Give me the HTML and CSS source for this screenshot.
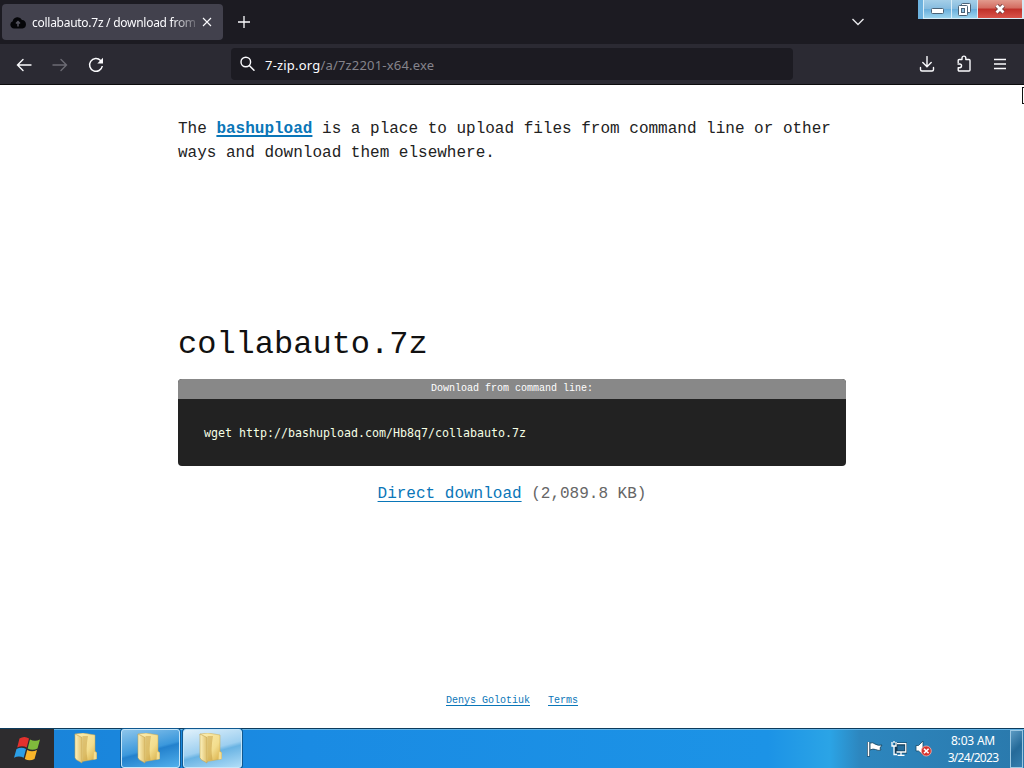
FILE: index.html
```
<!DOCTYPE html>
<html lang="en">

<head>
    <meta charset="UTF-8">
    <title>collabauto.7z / download from bashupload</title>
    <link rel="stylesheet" href="styles.css">
</head>

<body>

    <div class="tabs">
        <div class="tab">
            <svg class="cloud" width="16" height="13" viewBox="0 0 16 13">
                <path d="M4 12.500a3.800 3.800 0 0 1-1.300-7.300A5 5 0 0 1 12 4a4.300 4.300 0 0 1 .5 8.500z" fill="#050508"/>
                <path d="M8 10.500V6M6 7.500l2-2 2 2" stroke="#55545f" stroke-width="1.500" fill="none"/>
            </svg>
            <span class="tab-title">collabauto.7z / download from</span>
            <svg class="tab-close" width="10" height="10" viewBox="0 0 10 10">
                <path d="M1 1l8 8M9 1L1 9" stroke="#fbfbfe" stroke-width="1.100"/>
            </svg>
        </div>
        <svg class="new-tab" width="12" height="12" viewBox="0 0 12 12">
            <path d="M6 0v12M0 6h12" stroke="#fbfbfe" stroke-width="1.300"/>
        </svg>
        <svg class="all-tabs" width="14" height="8" viewBox="0 0 14 8">
            <path d="M1.500 1L7 6.500 12.500 1" stroke="#e6e6ea" stroke-width="1.400" fill="none"/>
        </svg>
        <div class="window-buttons">
            <div class="edge"></div>
            <div class="win-btn minimize">
                <svg width="13" height="6" viewBox="0 0 13 6">
                    <rect x=".5" y=".5" width="12" height="5" rx="1" fill="#fff" stroke="#4b6276"/>
                </svg>
            </div>
            <div class="win-btn restore">
                <svg width="13" height="13" viewBox="0 0 13 13">
                    <rect x="3.500" y=".5" width="9" height="9" rx="1" fill="#fff" stroke="#4b6276"/>
                    <rect x=".5" y="2.500" width="9" height="10" rx="1" fill="#fff" stroke="#4b6276"/>
                    <rect x="3.500" y="5.500" width="3" height="4" fill="#8fc0df" stroke="#4b6276"/>
                </svg>
            </div>
            <div class="win-btn close">
                <svg width="12" height="10" viewBox="0 0 12 10">
                    <path d="M2.500 1.500l7 7M9.500 1.500l-7 7" stroke="#6a3a3c" stroke-width="4.400"/>
                    <path d="M2.500 1.500l7 7M9.500 1.500l-7 7" stroke="#fff" stroke-width="2.800"/>
                </svg>
            </div>
        </div>
    </div>

    <div class="toolbar">
        <svg class="back" width="16" height="14" viewBox="0 0 16 14">
            <path d="M15 7H1.500M7 1.500L1.500 7 7 12.500" stroke="#fbfbfe" stroke-width="1.400" fill="none" stroke-linecap="round"/>
        </svg>
        <svg class="forward" width="16" height="14" viewBox="0 0 16 14">
            <path d="M1 7h13.500M9 1.500L14.500 7 9 12.500" stroke="#6c6b74" stroke-width="1.400" fill="none" stroke-linecap="round"/>
        </svg>
        <svg class="reload" width="16" height="16" viewBox="0 0 16 16">
            <path d="M14.300 9A6.400 6.400 0 1 1 12.600 3.500L14 5" stroke="#fbfbfe" stroke-width="1.500" fill="none"/>
            <path d="M15 .8v5.700H9.300z" fill="#fbfbfe"/>
        </svg>
        <div class="urlbar">
            <svg width="16" height="16" viewBox="0 0 16 16">
                <circle cx="5.800" cy="6" r="4.800" stroke="#fbfbfe" stroke-width="1.400" fill="none"/>
                <path d="M9.300 9.500l4.700 4.700" stroke="#fbfbfe" stroke-width="1.500" stroke-linecap="round"/>
            </svg>
            <span class="url">7-zip.org<span class="path">/a/7z2201-x64.exe</span></span>
        </div>
        <div class="tools">
            <svg width="16" height="16" viewBox="0 0 16 16">
                <path d="M8 .5v10M3.800 6.500L8 10.700l4.200-4.200M1.500 11.500v2a1.500 1.500 0 0 0 1.500 1.500h10a1.500 1.500 0 0 0 1.500-1.500v-2" stroke="#fbfbfe" stroke-width="1.400" fill="none" stroke-linecap="round"/>
            </svg>
            <svg width="16" height="18" viewBox="0 0 16 18">
                <path d="M2.200 8V5.500a1 1 0 0 1 1-1H6V3a1.900 1.900 0 0 1 3.800 0v1.500h3.200a1 1 0 0 1 1 1V15a1 1 0 0 1-1 1H3.200a1 1 0 0 1-1-1v-2.300h1.500a1.700 1.700 0 0 0 0-3.700H1.500" stroke="#fbfbfe" stroke-width="1.400" fill="none" stroke-linejoin="round"/>
            </svg>
            <svg width="14" height="12" viewBox="0 0 14 12">
                <path d="M1 1.500h12M1 6h12M1 10.500h12" stroke="#fbfbfe" stroke-width="1.300"/>
            </svg>
        </div>
    </div>

    <div class="page">
        <p class="intro">The <a href="#">bashupload</a> is a place to upload files from command line or other ways and download them elsewhere.</p>
        <h1>collabauto.7z</h1>
        <div class="command">
            <div class="command-label">Download from command line:</div>
            <code>wget http://bashupload.com/Hb8q7/collabauto.7z</code>
        </div>
        <p class="direct"><a href="#">Direct download</a> (2,089.8 KB)</p>
        <div class="footer">
            <a href="#">Denys Golotiuk</a>
            <a href="#">Terms</a>
        </div>
        <!-- mouse pointer at the right edge -->
        <div class="pointer"></div>
    </div>

    <div class="taskbar">
        <div class="start">
            <svg width="28" height="26" viewBox="0 0 28 26">
                <path d="M6.500 2.500q5-3 9.500 0l-2.300 9q-4.500-2.500-9.500 0z" fill="#e3312d"/>
                <path d="M17 3.500q5 2.500 10 0l-2.500 9q-5 2.500-9.800 0z" fill="#7fba3c"/>
                <path d="M3.500 13q5-2.500 9.500 0l-2.300 8.800q-4.700-2.800-9.700 0z" fill="#2c9fe6"/>
                <path d="M14.200 14q4.700 2.500 9.800 0l-2.500 9q-5 2.500-9.700 0z" fill="#f9b52a"/>
            </svg>
        </div>
        <div class="task">
            <svg width="24" height="31" viewBox="0 0 24 31"><use href="#folder"/></svg>
        </div>
        <div class="task open">
            <svg width="24" height="31" viewBox="0 0 24 31"><use href="#folder"/></svg>
        </div>
        <div class="task open active">
            <svg width="24" height="31" viewBox="0 0 24 31"><use href="#folder"/></svg>
        </div>
        <div class="tray">
            <svg width="16" height="16" viewBox="0 0 16 16">
                <path d="M1.500 1v14.500" stroke="#123c58" stroke-width="3"/>
                <path d="M3 2q3-1 5 1 3 2 7 1l-2 3 1 2q-3 1-5.500-.5Q6 7.500 3 9z" fill="#fff" stroke="#174967" stroke-width=".9"/>
                <path d="M1.500 1v14" stroke="#fff" stroke-width="1.600"/>
            </svg>
            <svg width="16" height="16" viewBox="0 0 16 16">
                <rect x="5" y="3" width="10" height="8" fill="#266c9b" stroke="#123c58" stroke-width="3"/>
                <path d="M6 2.700h8.800v8.300H5.500M10 11v3M6.500 14.300h7M1 1v4h4V1M3 0v2M3 5v8.500h3" stroke="#fff" stroke-width="1.300" fill="none"/>
            </svg>
            <svg width="17" height="17" viewBox="0 0 17 17">
                <path d="M1 5.500h2.500L8 1v14l-4.500-4H1z" fill="#fff" stroke="#174967" stroke-width=".8"/>
                <circle cx="11.300" cy="11" r="5" fill="#d8332d" stroke="#f2b4ac" stroke-width=".8"/>
                <path d="M9 8.700l4.600 4.600M13.600 8.700L9 13.300" stroke="#fff" stroke-width="1.600"/>
            </svg>
        </div>
        <div class="clock">
            <span class="time">8:03 AM</span>
            <span class="date">3/24/2023</span>
        </div>
        <div class="show-desktop"></div>
    </div>

    <svg class="defs" width="0" height="0">
        <defs>
            <linearGradient id="front" x1="0" x2="1" y1="0" y2="0">
                <stop offset="0" stop-color="#fdf3c0"/>
                <stop offset="1" stop-color="#dfc06c"/>
            </linearGradient>
            <linearGradient id="back" x1="0" x2="1" y1="0" y2="1">
                <stop offset="0" stop-color="#fcefb4"/>
                <stop offset=".6" stop-color="#f3dd8d"/>
                <stop offset="1" stop-color="#d5a93e"/>
            </linearGradient>
            <symbol id="folder" viewBox="0 0 24 31">
                <path d="M1 1l8-1 12 2v16l1.500 1.500V26L8 28.500z" fill="url(#back)" stroke="#c9a952" stroke-width=".5"/>
                <path d="M8.500 3v25l5-1q-2-11 .5-24z" fill="#b98d2c" opacity=".4"/>
                <path d="M1 1l7 3.500V30l-6-3.500-1-2z" fill="url(#front)" stroke="#c3a455" stroke-width=".6"/>
                <path d="M20 19l2.500.5V26l-3 .5z" fill="#f3dd92"/>
            </symbol>
        </defs>
    </svg>

</body>

</html>
```
FILE: styles.css
```
* {
    box-sizing: border-box;
}

body {
    margin: 0;
    width: 1024px;
    height: 768px;
    display: flex;
    flex-direction: column;
    overflow: hidden;
    background: #fff;
    font-family: "Noto Sans", "Open Sans", sans-serif;
}

svg {
    display: block;
    flex: none;
}

/* browser */
.tabs {
    height: 44px;
    display: flex;
    align-items: center;
    padding-left: 2px;
    background: #1c1b22;
}

.tab {
    width: 221px;
    height: 36px;
    display: flex;
    align-items: center;
    padding-left: 8px;
    border-radius: 4px;
    background: #42414d;
    color: #fbfbfe;
}

.tab-title {
    width: 163px;
    margin-left: 6px;
    padding-top: 1px;
    white-space: nowrap;
    font-size: 12px;
    letter-spacing: -0.27px;
    -webkit-mask-image: linear-gradient(to right, #000 140px, transparent 170px);
    mask-image: linear-gradient(to right, #000 140px, transparent 170px);
}

.tab-close {
    margin-left: 7px;
}

.new-tab {
    margin-left: 15px;
}

.all-tabs {
    margin-left: auto;
}

.window-buttons {
    align-self: flex-start;
    display: flex;
    width: 106px;
    height: 19px;
    margin-left: 53px;
    background: #d6e9f5;
}

.edge {
    width: 5px;
    background: #6db2de;
}

.win-btn {
    display: flex;
    align-items: center;
    justify-content: center;
    border-left: 1px solid #d8edf8;
    border-bottom: 1px solid #d8edf8;
    background: linear-gradient(#a5cfe8, #85bbdf 50%, #69aedb 51%, #9bd4ee);
}

.minimize {
    width: 28px;
    padding-top: 4px;
}

.restore {
    width: 26px;
}

.close {
    width: 45px;
    margin-right: auto;
    background: linear-gradient(#e29a8d, #d36b60 45%, #bf3029 50%, #d9534a);
}

.toolbar {
    height: 41px;
    display: flex;
    align-items: center;
    padding-left: 16px;
    background: #2b2a33;
    border-bottom: 1px solid #0c0c0d;
}

.back,
.forward,
.reload {
    margin-top: 1px;
}

.forward,
.reload {
    margin-left: 20px;
}

.urlbar {
    width: 562px;
    height: 32px;
    display: flex;
    align-items: center;
    margin-left: 127px;
    padding-left: 9px;
    border-radius: 4px;
    background: #1c1b22;
}

.url {
    margin-left: 9px;
    padding-top: 2px;
    font-size: 13px;
    letter-spacing: 0.19px;
    color: #fbfbfe;
}

.path {
    color: #85848c;
}

.tools {
    display: flex;
    align-items: center;
    gap: 21px;
    margin-left: auto;
    padding-right: 17px;
}

/* page */
.page {
    position: relative;
    height: 643px;
    padding: 32px 178px 0;
    font-family: "Courier New", "Liberation Mono", monospace;
    font-size: 16px;
    line-height: 24px;
    color: #222;
}

.page p {
    margin: 0;
}

.page a {
    color: #0a76b8;
    text-decoration: underline;
    text-decoration-thickness: 1px;
    text-decoration-skip-ink: none;
    text-underline-offset: 3px;
}

.page .intro a {
    font-weight: bold;
    text-decoration-thickness: 2px;
    text-underline-offset: 2px;
}

.page h1 {
    margin: 160px 0 0;
    font-size: 32px;
    font-weight: normal;
    line-height: 40px;
    color: #111;
}

.command {
    height: 87px;
    margin-top: 14px;
    overflow: hidden;
    border-radius: 4px;
    background: #222;
}

.command-label {
    height: 20px;
    background: #888;
    color: #fff;
    font-size: 10px;
    line-height: 19px;
    text-align: center;
}

.command code {
    display: block;
    padding: 22px 26px;
    font-family: "DejaVu Sans Mono", monospace;
    font-size: 11.63px;
    line-height: 24px;
    color: #f5ffe5;
}

.page .direct {
    margin-top: 16px;
    text-align: center;
    color: #666;
}

.footer {
    display: flex;
    justify-content: center;
    gap: 18px;
    margin-top: 189px;
    font-size: 10px;
    line-height: 11px;
}

.footer a {
    text-underline-offset: 2px;
}

.pointer {
    position: absolute;
    top: 2px;
    right: 0;
    width: 2px;
    height: 17px;
    border: 1px solid #111;
    border-right: none;
    background: #fff;
}

/* taskbar */
.taskbar {
    height: 40px;
    display: flex;
    align-items: stretch;
    border-top: 1px solid #0d3b5c;
    background: linear-gradient(to right, #1a83d8, #1a8be3 30%, #1c93e6 75%, #2ba4e6 81%, #2d86be 84%, #2a79ac 100%);
    box-shadow: inset 0 1px #63b3e6;
}

.start {
    width: 54px;
    display: flex;
    align-items: center;
    justify-content: center;
    background: #2d2c2e;
}

.task {
    width: 59px;
    display: flex;
    align-items: center;
    justify-content: center;
    margin-left: 3px;
    padding-right: 3px;
    border-radius: 3px;
}

.task:nth-child(2) {
    width: 62px;
    margin-left: 2px;
}

.open {
    border: 1px solid #c5e6fa;
    background: linear-gradient(165deg, #8dc5eb, #3b98dc 50%, #2381cd 55%, #52b0ec);
    box-shadow: 0 0 0 1px #10588f;
}

.active {
    background: linear-gradient(165deg, #e0f1fb, #9dcff0 50%, #69b3e3 58%, #b0ddf7);
}

.tray {
    display: flex;
    align-items: center;
    gap: 8px;
    margin-left: auto;
}

.clock {
    width: 74px;
    display: flex;
    flex-direction: column;
    align-items: center;
    justify-content: center;
    margin-left: 4px;
    font-size: 12px;
    line-height: 17px;
    color: #fff;
}

.time {
    letter-spacing: -0.2px;
}

.date {
    letter-spacing: -0.7px;
}

.show-desktop {
    width: 13px;
    margin: 1px 1px 0 0;
    border: 1px solid #9bc8e3;
    background: linear-gradient(135deg, #5c9bc3, #256a99 50%, #347eae);
}

.defs {
    position: absolute;
}
```
